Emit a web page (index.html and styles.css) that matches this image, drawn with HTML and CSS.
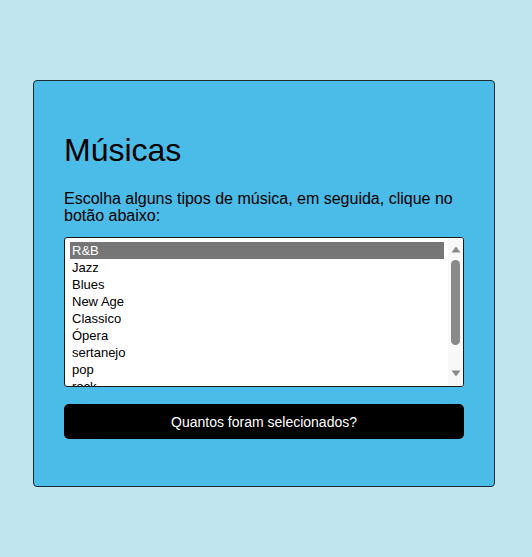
FILE: index.html
```html
<!DOCTYPE html>
<html lang="pt">
<head>
<meta charset="utf-8">
<title>Músicas</title>
<link rel="stylesheet" href="styles.css">
</head>
<body>
<main class="card">
  <h1 class="title">Músicas</h1>
  <p class="intro">Escolha alguns tipos de música, em seguida, clique no botão abaixo:</p>
  <div class="list" role="listbox" aria-multiselectable="true">
    <ul class="options">
      <li class="option selected" role="option" aria-selected="true">R&amp;B</li>
      <li class="option" role="option">Jazz</li>
      <li class="option" role="option">Blues</li>
      <li class="option" role="option">New Age</li>
      <li class="option" role="option">Classico</li>
      <li class="option" role="option">Ópera</li>
      <li class="option" role="option">sertanejo</li>
      <li class="option" role="option">pop</li>
      <li class="option" role="option">rock</li>
    </ul>
    <div class="scrollbar" aria-hidden="true">
      <svg class="arrow" width="10" height="7" viewBox="0 0 10 7"><polygon points="5,0.5 9.5,6.5 0.5,6.5" fill="#8a8a8a"/></svg>
      <div class="track"><div class="thumb"></div></div>
      <svg class="arrow" width="10" height="7" viewBox="0 0 10 7"><polygon points="0.5,0.5 9.5,0.5 5,6.5" fill="#8a8a8a"/></svg>
    </div>
  </div>
  <button class="btn" type="button">Quantos foram selecionados?</button>
</main>
</body>
</html>
```
FILE: styles.css
```css
html, body {
  margin: 0;
  padding: 0;
}
body {
  background: #c0e5ef;
  font-family: "Liberation Sans", Arial, sans-serif;
  padding: 80px 0 0 33px;
  min-height: 557px;
  box-sizing: border-box;
}
.card {
  width: 400px;
  background: #4bbbe7;
  border: 1px solid #1d2a30;
  border-radius: 4px;
  padding: 30px 30px 47px;
  display: flex;
  flex-direction: column;
}
.title {
  font-size: 32px;
  font-weight: normal;
  margin: 21px 0 21px;
  color: #000;
}
.intro {
  font-size: 16px;
  margin: 0 0 13px;
  line-height: 17px;
  color: #000;
}
.list {
  width: 400px;
  height: 150px;
  box-sizing: border-box;
  border: 1px solid #1a1a1a;
  border-radius: 3px;
  margin: 0 0 17px;
  background: #fff;
  display: flex;
  overflow: hidden;
}
.options {
  list-style: none;
  margin: 0;
  padding: 4px 4px 0 5px;
  flex: 1;
  overflow: hidden;
  font-size: 13px;
  color: #000;
}
.option {
  padding: 0 2px;
  line-height: 17px;
  height: 17px;
  white-space: nowrap;
}
.option.selected {
  background: #767676;
  color: #fff;
}
.scrollbar {
  width: 15px;
  background: #f8f8f8;
  display: flex;
  flex-direction: column;
  align-items: center;
  padding: 8px 0 9px;
  box-sizing: border-box;
}
.arrow {
  display: block;
  flex: none;
}
.track {
  flex: 1;
  width: 100%;
  display: flex;
  justify-content: center;
  padding-top: 7px;
}
.thumb {
  width: 9px;
  height: 85px;
  background: #8a8a8a;
  border-radius: 4.5px;
}
.btn {
  width: 400px;
  height: 35px;
  background: #000;
  color: #fff;
  border: none;
  border-radius: 5px;
  font-family: "Liberation Sans", Arial, sans-serif;
  font-size: 14px;
  font-weight: normal;
  cursor: pointer;
}
```
